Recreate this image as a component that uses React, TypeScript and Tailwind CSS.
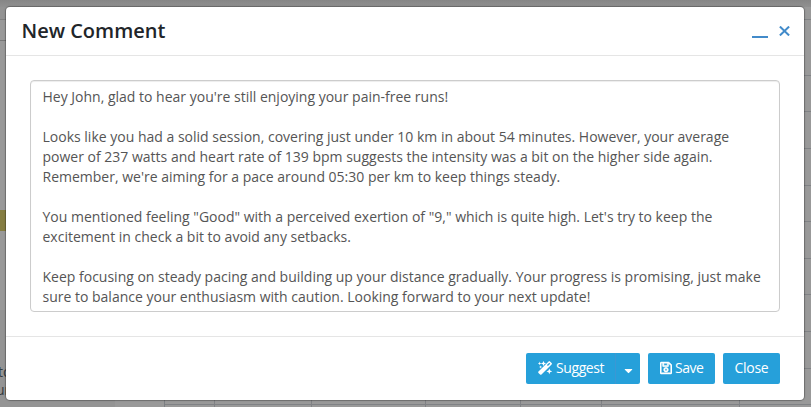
import { FaCaretDown, FaRegSave } from "react-icons/fa";

const paragraphs = [
  ["Hey John, glad to hear you're still enjoying your pain-free runs!"],
  [
    "Looks like you had a solid session, covering just under 10 km in about 54 minutes. However, your average",
    "power of 237 watts and heart rate of 139 bpm suggests the intensity was a bit on the higher side again.",
    "Remember, we're aiming for a pace around 05:30 per km to keep things steady.",
  ],
  [
    "You mentioned feeling \"Good\" with a perceived exertion of \"9,\" which is quite high. Let's try to keep the",
    "excitement in check a bit to avoid any setbacks.",
  ],
  [
    "Keep focusing on steady pacing and building up your distance gradually. Your progress is promising, just make",
    "sure to balance your enthusiasm with caution. Looking forward to your next update!",
  ],
];

function WandIcon() {
  return (
    <svg className="h-3.5 w-3.5 shrink-0" viewBox="0 0 14 14" fill="currentColor">
      <path
        fillRule="evenodd"
        d="M10.6.4a1 1 0 0 1 1.400 0l1.600 1.600a1 1 0 0 1 0 1.400L3.500 13.500a1 1 0 0 1-1.400 0L.5 11.900a1 1 0 0 1 0-1.400zM11.300 1.700 8.900 4.100l1 1 2.400-2.400z"
      />
      <path d="m5.500-.1.8 1.800 1.800.8-1.800.8-.8 1.800-.8-1.800-1.800-.8 1.800-.8zM1.700.6l.5 1.300 1.300.5-1.300.5-.5 1.300-.5-1.300-1.300-.5 1.300-.5zM2.600 4.400l.4 1.200 1.200.4-1.200.4-.4 1.200-.4-1.200L1 6l1.200-.4zM11.300 7.600l.8 2 2 .8-2 .8-.8 2-.8-2-2-.8 2-.8z" />
    </svg>
  );
}

function Backdrop() {
  return (
    <div className="absolute inset-0 flex flex-col bg-[#999999]">
      <div className="h-[7px] shrink-0 bg-linear-to-b from-[#868686] to-[#909090]" />
      <div className="flex h-[393px] shrink-0 justify-between">
        <div className="flex w-1.5 flex-col text-sm leading-[18px] text-[#343a40]">
          <div className="h-[13px] shrink-0 border-b border-[#808080] bg-[#939393]" />
          <div className="h-[21px] shrink-0 border-b border-[#777777]" />
          <div className="h-[169px] shrink-0" />
          <div className="h-[21px] shrink-0 bg-[#857d42]" />
          <div className="h-[79px] shrink-0" />
          <div className="flex h-[90px] shrink-0 flex-col items-start bg-[#949494] pt-[53px]">
            <span className="-ml-0.5">to</span>
            <span className="-ml-1">ur</span>
          </div>
        </div>
        <div className="flex w-[7px] flex-col">
          <div className="h-[13px] border-b border-[#808285]" />
          <div className="h-14 border-b border-[#808285]" />
          <div className="h-9 border-b border-[#808285]" />
          <div className="h-[37px] border-b border-[#808285]" />
          <div className="h-[37px] border-b border-[#808285]" />
          <div className="h-9 border-b border-[#808285]" />
          <div className="h-[37px] border-b border-[#808285]" />
          <div className="h-9 border-b border-[#808285]" />
          <div className="h-[37px] border-b border-[#808285]" />
          <div className="h-[37px] border-b border-[#808285]" />
        </div>
      </div>
      <div className="flex h-[7px] shrink-0">
        <div className="w-[115px] bg-[#949494]" />
        <div className="w-[50px] border-r border-[#7c7f83]" />
        <div className="flex flex-1 bg-[linear-gradient(to_bottom,transparent_4px,#808285_4px,#808285_5px,transparent_5px)]">
          <div className="w-[50px] border-r border-[#808285]" />
          <div className="w-[97px] border-r border-[#808285]" />
          <div className="w-[114px] border-r border-[#808285]" />
          <div className="w-[95px] border-r border-[#808285]" />
          <div className="w-[81px] border-r border-[#808285]" />
          <div className="w-[138px] border-r border-[#808285]" />
        </div>
      </div>
    </div>
  );
}

export default function App() {
  return (
    <div className="relative h-[407px] w-[811px] overflow-hidden px-1.5 pt-[7px] font-['Open_Sans',sans-serif]">
      <Backdrop />
      <div className="relative flex h-[393px] w-[798px] flex-col rounded-[4px] bg-white shadow-[0_0_0_1px_rgba(0,0,0,0.2),0_0_3px_rgba(0,0,0,0.2)]">
        <header className="flex h-[49px] shrink-0 items-center justify-between border-b border-[#e5e5e5] pr-3.5 pl-[15.5px]">
          <h4 className="text-xl leading-7 font-semibold text-[#212529]">New Comment</h4>
          <div className="flex items-center gap-[11px] text-[#428bca]">
            <button aria-label="Minimize" className="flex h-[14px] w-4 items-end">
              <span className="block h-0.5 w-4 bg-[#428bca]" />
            </button>
            <button aria-label="Close dialog">
              <svg className="h-2.5 w-[11px]" viewBox="0 0 11 10" stroke="currentColor" strokeWidth="2.1">
                <path d="M.9.600 10.100 9.400M10.100.600.9 9.400" />
              </svg>
            </button>
          </div>
        </header>
        <div className="h-[281px] shrink-0 border-b border-[#e5e5e5] px-6 pt-6">
          <div className="h-[232px] rounded-[4px] border border-[#cccccc] pt-1.5 pl-[11.5px] text-sm leading-5 text-[#555555] shadow-[inset_0_1px_1px_rgba(0,0,0,0.075)]">
            {paragraphs.map((lines, i) => (
              <p key={i} className="mb-5">
                {lines.map((line) => (
                  <span key={line} className="block whitespace-nowrap">
                    {line}
                  </span>
                ))}
              </p>
            ))}
          </div>
        </div>
        <footer className="flex justify-end gap-2 pt-4 pr-6 text-sm leading-5 text-white">
          <div className="flex h-[31px] w-[114px]">
            <button className="flex w-[90px] items-center gap-1 rounded-l-[2px] border-r border-[#3c97d3] bg-[#26a0da] pb-px pl-3 tracking-[-0.4px]">
              <WandIcon />
              Suggest
            </button>
            <button aria-label="More" className="flex w-6 items-center justify-center rounded-r-[2px] bg-[#26a0da] pt-[3px]">
              <FaCaretDown size={13} />
            </button>
          </div>
          <button className="flex h-[31px] w-[67px] items-center gap-[3px] rounded-[2px] bg-[#26a0da] pb-px pl-3 tracking-[-0.5px]">
            <FaRegSave className="h-3.5 w-3 shrink-0 stroke-white [stroke-width:18]" />
            Save
          </button>
          <button className="h-[31px] w-[57px] rounded-[2px] bg-[#26a0da] pb-px text-center tracking-[-0.3px]">Close</button>
        </footer>
      </div>
    </div>
  );
}
